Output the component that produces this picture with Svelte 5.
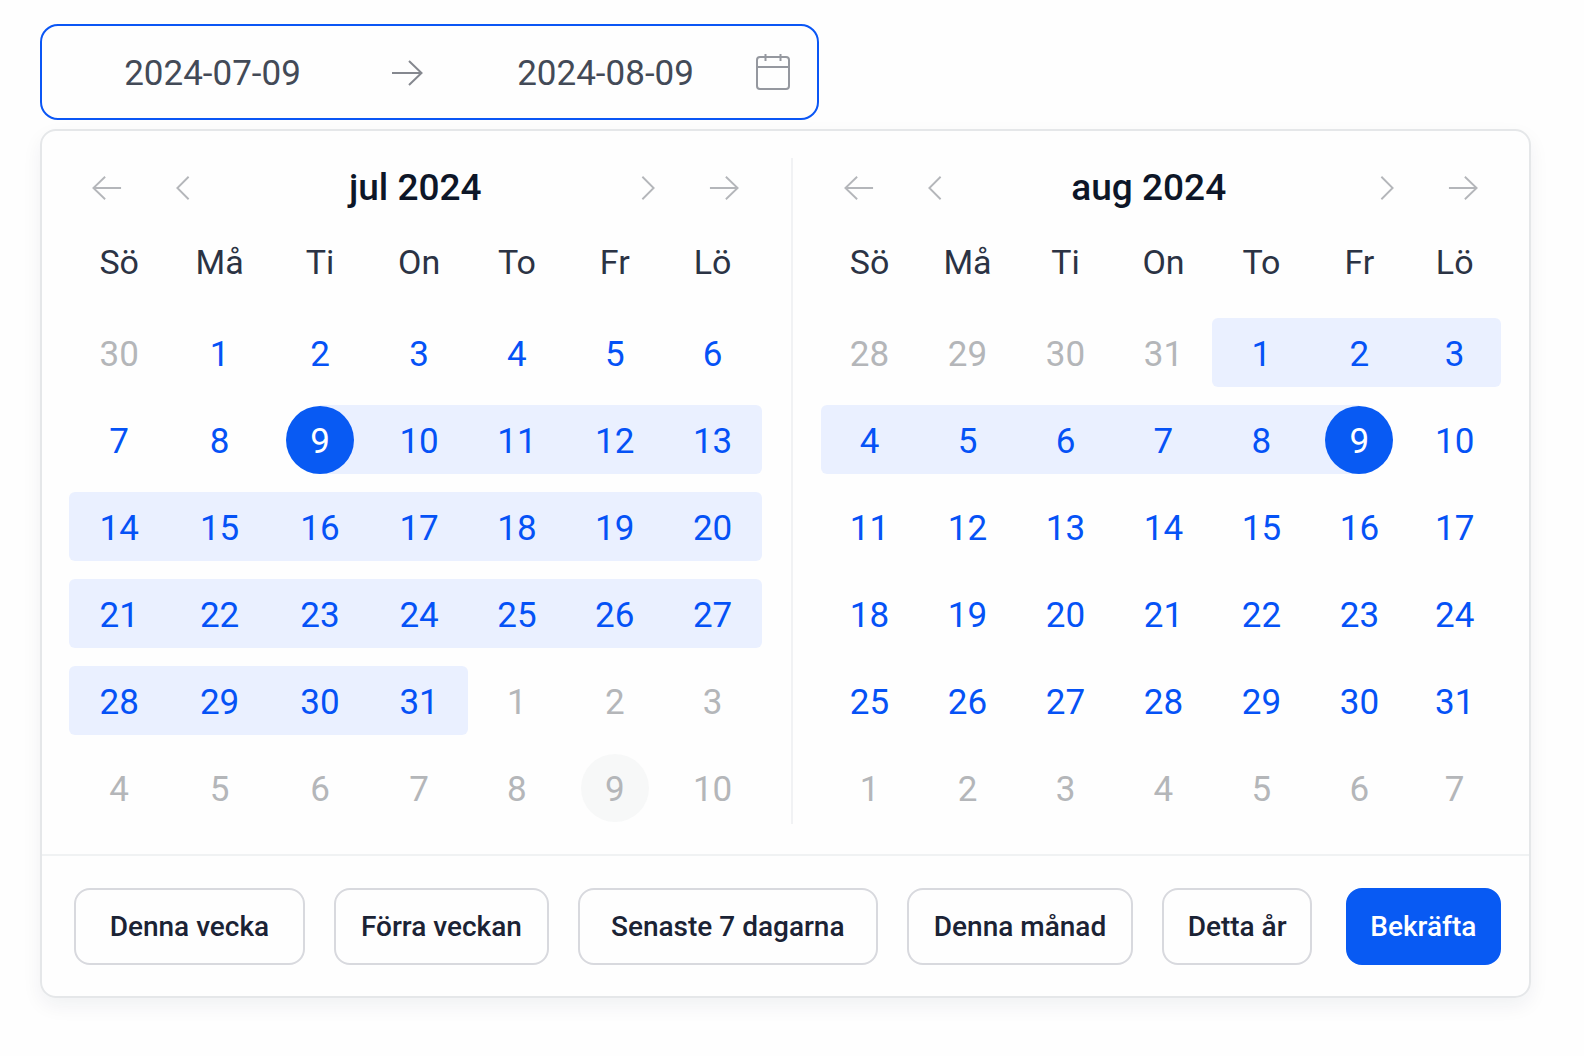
<script>
	const WEEKDAYS = ['Sö', 'Må', 'Ti', 'On', 'To', 'Fr', 'Lö'];
	const MONTHS = ['jan', 'feb', 'mar', 'apr', 'maj', 'jun', 'jul', 'aug', 'sep', 'okt', 'nov', 'dec'];

	// grow: share of the footer width
	const PRESETS = [
		{ label: 'Denna vecka', grow: 231 },
		{ label: 'Förra veckan', grow: 215 },
		{ label: 'Senaste 7 dagarna', grow: 301 },
		{ label: 'Denna månad', grow: 227 },
		{ label: 'Detta år', grow: 148 }
	];

	let start = $state('2024-07-09');
	let end = $state('2024-08-09');
	let year = $state(2024);
	let month = $state(6);

	let panels = $derived([buildMonth(year, month), buildMonth(year, month + 1)]);

	function toKey(date) {
		const m = String(date.getMonth() + 1).padStart(2, '0');
		const d = String(date.getDate()).padStart(2, '0');
		return `${date.getFullYear()}-${m}-${d}`;
	}

	function buildMonth(y, m) {
		const first = new Date(y, m, 1);
		const weeks = [];

		for (let w = 0; w < 6; w++) {
			const days = [];
			for (let i = 0; i < 7; i++) {
				const date = new Date(first.getFullYear(), first.getMonth(), 1 - first.getDay() + w * 7 + i);
				days.push({
					key: toKey(date),
					day: date.getDate(),
					outside: date.getMonth() !== first.getMonth()
				});
			}
			weeks.push(days);
		}

		return { title: `${MONTHS[first.getMonth()]} ${first.getFullYear()}`, weeks };
	}

	function inRange(d) {
		return Boolean(d) && !d.outside && d.key >= start && d.key <= end;
	}

	function move(count) {
		const next = new Date(year, month + count, 1);
		year = next.getFullYear();
		month = next.getMonth();
	}

	function pick(key) {
		if (end || key < start) {
			start = key;
			end = '';
		} else {
			end = key;
		}
	}
</script>

{#snippet arrow(left)}
	<svg class:flip={left} width="32" height="32" viewBox="0 0 32 32" aria-hidden="true">
		<path d="M1 16H31M18 4L30.500 16L18 28" />
	</svg>
{/snippet}

{#snippet chevron(left)}
	<svg class:flip={left} width="32" height="32" viewBox="0 0 32 32" aria-hidden="true">
		<path d="M10 4L22 16L10 28" />
	</svg>
{/snippet}

<main>
	<div class="field">
		<input type="text" aria-label="Startdatum" bind:value={start}>
		<span class="sep">{@render arrow(false)}</span>
		<input type="text" aria-label="Slutdatum" bind:value={end}>
		<button class="open" aria-label="Öppna kalender">
			<svg width="34" height="36" viewBox="0 0 34 36" aria-hidden="true">
				<rect x="1" y="3" width="32" height="32" rx="3" />
				<path d="M1 13H33M9.500 0V7M24.500 0V7" />
			</svg>
		</button>
	</div>

	<section class="panel">
		<div class="months">
			{#each panels as panel, p}
				{#if p > 0}
					<div class="divider"></div>
				{/if}
				<div class="month">
					<div class="nav">
						<button aria-label="Föregående år" onclick={() => move(-12)}>{@render arrow(true)}</button>
						<button aria-label="Föregående månad" onclick={() => move(-1)}>{@render chevron(true)}</button>
						<h2>{panel.title}</h2>
						<button aria-label="Nästa månad" onclick={() => move(1)}>{@render chevron(false)}</button>
						<button aria-label="Nästa år" onclick={() => move(12)}>{@render arrow(false)}</button>
					</div>
					<table>
						<thead>
							<tr>
								{#each WEEKDAYS as name}
									<th scope="col">{name}</th>
								{/each}
							</tr>
						</thead>
						<tbody>
							{#each panel.weeks as week}
								<tr>
									{#each week as d, i}
										<td
											class:range={inRange(d)}
											class:round-left={!inRange(week[i - 1])}
											class:round-right={!inRange(week[i + 1])}
											class:from={!d.outside && d.key === start}
											class:to={!d.outside && d.key === end}
										>
											<button
												class="day"
												class:outside={d.outside}
												class:selected={!d.outside && (d.key === start || d.key === end)}
												class:ghost={d.outside && d.key === end}
												onclick={() => pick(d.key)}
											>{d.day}</button>
										</td>
									{/each}
								</tr>
							{/each}
						</tbody>
					</table>
				</div>
			{/each}
		</div>

		<footer>
			{#each PRESETS as preset}
				<button class="preset" style:flex-grow={preset.grow}>{preset.label}</button>
			{/each}
			<button class="preset confirm">Bekräfta</button>
		</footer>
	</section>
</main>

<style>
	:global(body) {
		margin: 0;
		background: #fefefe;
	}

	main {
		padding: 24px 53px 58px 40px;
		font-family: Roboto, "Liberation Sans", sans-serif;
		color: #1b2335;
	}

	button, input {
		box-sizing: border-box;
		margin: 0;
		padding: 0;
		border: 0;
		background: none;
		color: inherit;
		font: inherit;
	}

	button {
		cursor: pointer;
	}

	svg {
		display: block;
		fill: none;
		stroke: currentColor;
		stroke-width: 2;
	}

	.flip {
		transform: scaleX(-1);
	}

	.field {
		box-sizing: border-box;
		display: flex;
		align-items: center;
		width: 52.25%;
		min-width: 640px;
		height: 96px;
		padding: 0 27px 0 28px;
		border: 2px solid #0a56f5;
		border-radius: 18px;
	}

	.field input {
		flex: 1;
		min-width: 0;
		padding-top: 4px;
		color: #434a57;
		font-size: 35px;
		line-height: 48px;
		text-align: center;
		outline: none;
	}

	.sep {
		margin: 0 40px 0 36px;
		padding-top: 2px;
		color: #85888f;
	}

	.open {
		margin-left: 8px;
		color: #95989f;
	}

	.panel {
		margin-top: 9px;
		border: 2px solid #e5e7e9;
		border-radius: 16px;
		box-shadow: 0 8px 20px rgba(20, 40, 60, .06);
	}

	.months {
		display: flex;
		padding: 27px 0 14px;
	}

	.month {
		flex: 736 1 0;
		padding: 0 28px;
	}

	.month:first-child {
		flex-grow: 749;
		padding: 0 29px 0 27px;
	}

	.divider {
		width: 2px;
		margin-bottom: 16px;
		background: #f1f2f4;
	}

	.nav {
		display: flex;
		align-items: center;
		gap: 32px;
		height: 60px;
		padding: 0 16px;
	}

	.nav button {
		display: flex;
		justify-content: center;
		width: 44px;
		padding: 6px 0;
		color: #b4b6ba;
	}

	.nav svg {
		width: 30px;
	}

	h2 {
		flex: 1;
		margin: 0;
		color: #0d1628;
		font-size: 37px;
		font-weight: 500;
		line-height: 48px;
		text-align: center;
	}

	.month:last-child h2 {
		padding-right: 24px;
	}

	table {
		width: 100%;
		table-layout: fixed;
		border-collapse: separate;
		border-spacing: 0 18px;
	}

	th {
		box-sizing: border-box;
		height: 64px;
		padding: 0 0 12px;
		color: #2b3344;
		font-size: 34px;
		font-weight: 400;
	}

	.month:first-child th:nth-child(-n+3) {
		width: 14.5%;
	}

	.month:last-child th:nth-child(-n+6) {
		width: 14.4%;
	}

	td {
		height: 69px;
		padding: 0;
		text-align: center;
	}

	.range {
		background: #eaf0ff;
	}

	.round-left {
		border-radius: 6px 0 0 6px;
	}

	.round-right {
		border-radius: 0 6px 6px 0;
	}

	.round-left.round-right {
		border-radius: 6px;
	}

	.from {
		background: linear-gradient(to right, transparent 50%, #eaf0ff 50%);
	}

	.to {
		background: linear-gradient(to left, transparent 50%, #eaf0ff 50%);
	}

	.day {
		display: block;
		width: 68px;
		height: 68px;
		margin: 0 auto;
		padding-top: 4px;
		border-radius: 50%;
		color: #0552f6;
		font-size: 35px;
		line-height: 64px;
	}

	.outside {
		color: #b4b6b9;
	}

	.selected {
		background: #085af3;
		color: #fff;
	}

	.ghost {
		background: #f7f8f8;
	}

	footer {
		display: flex;
		gap: 29px;
		padding: 32px 28px 31px 32px;
		border-top: 2px solid #f0f2f3;
	}

	.preset {
		flex: 1 1 0;
		height: 77px;
		border: 2px solid #d8d9de;
		border-radius: 16px;
		font-size: 28px;
		font-weight: 500;
		white-space: nowrap;
	}

	.confirm {
		flex-grow: 154;
		margin-left: 5px;
		border-color: #085af3;
		background: #085af3;
		color: #fff;
	}
</style>
